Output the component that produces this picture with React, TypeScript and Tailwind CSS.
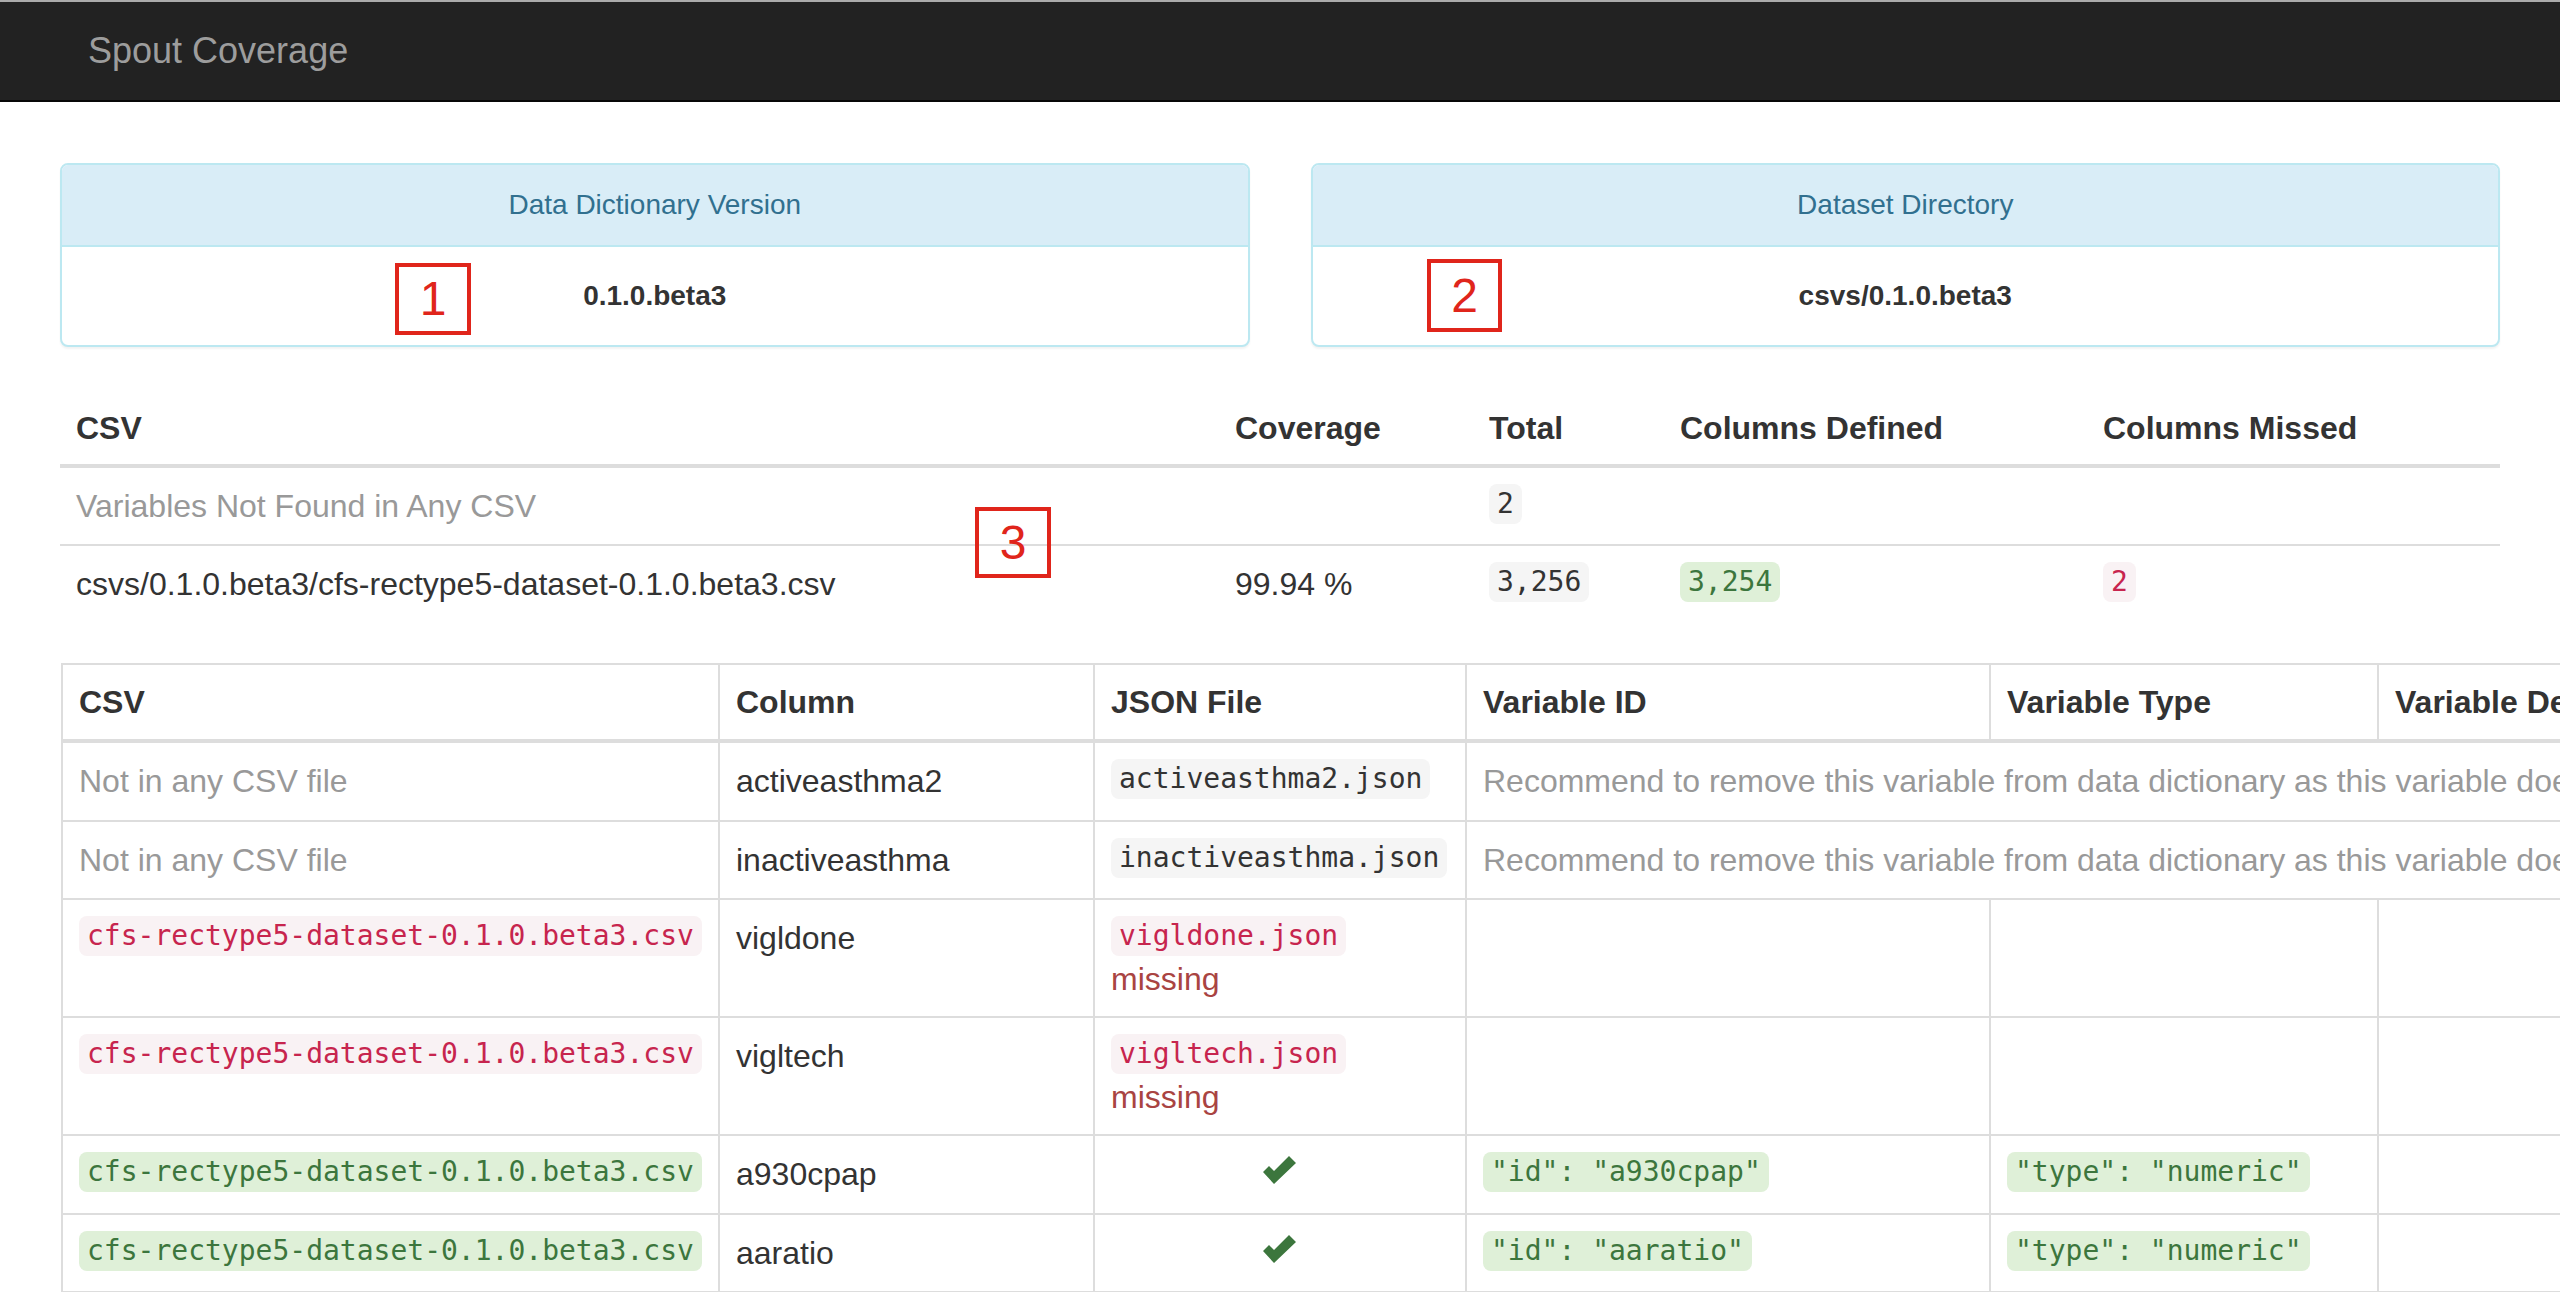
import type { ReactNode } from "react"

type Tone = "gray" | "green" | "pink"

const toneClass: Record<Tone, string> = {
  gray: "bg-[#f5f5f5] text-[#333]",
  green: "bg-[#dff0d8] text-[#3c763d]",
  pink: "bg-[#f9f2f4] text-[#c7254e]",
}

function Code({ tone, children }: { tone: Tone; children: ReactNode }) {
  return (
    <code
      className={`inline-block whitespace-nowrap rounded-lg px-2 py-1 align-top font-['DejaVu_Sans_Mono',monospace] text-[28px] leading-[32px] ${toneClass[tone]}`}
    >
      {children}
    </code>
  )
}

function Check() {
  return (
    <svg viewBox="0 0 34 28" className="mx-auto mt-1 block h-[28px] w-[34px]" fill="#3c763d">
      <polygon points="0,16 6,10 11,15 26,0 33,7 11,28" />
    </svg>
  )
}

// red annotation boxes drawn over the page
function Marker({ n, className }: { n: number; className: string }) {
  return (
    <div
      className={`absolute flex items-center justify-center border-4 border-[#e0251b] text-[48px] leading-none text-[#e0251b] ${className}`}
    >
      {n}
    </div>
  )
}

const panels = [
  { title: "Data Dictionary Version", value: "0.1.0.beta3" },
  { title: "Dataset Directory", value: "csvs/0.1.0.beta3" },
]

const summaryHead = ["CSV", "Coverage", "Total", "Columns Defined", "Columns Missed"]
const detailHead = ["CSV", "Column", "JSON File", "Variable ID", "Variable Type", "Variable Description"]

const csvFile = "cfs-rectype5-dataset-0.1.0.beta3.csv"
const note = "Recommend to remove this variable from data dictionary as this variable does not exist in any CSV."

type Row =
  | { kind: "orphan"; column: string; json: string; lh: string }
  | { kind: "missing"; column: string; json: string; lh: string }
  | { kind: "ok"; column: string; id: string; lh: string }

const rows: Row[] = [
  { kind: "orphan", column: "activeasthma2", json: "activeasthma2.json", lh: "leading-[45px]" },
  { kind: "orphan", column: "inactiveasthma", json: "inactiveasthma.json", lh: "leading-[44px]" },
  { kind: "missing", column: "vigldone", json: "vigldone.json", lh: "leading-[45px]" },
  { kind: "missing", column: "vigltech", json: "vigltech.json", lh: "leading-[45px]" },
  { kind: "ok", column: "a930cpap", id: "a930cpap", lh: "leading-[45px]" },
  { kind: "ok", column: "aaratio", id: "aaratio", lh: "leading-[44px]" },
]

const td = "border-l-2 border-[#ddd] px-4 py-4 align-top"
const sumTd = "px-4 py-4 align-top leading-[44px]"

export default function App() {
  return (
    <div className="relative h-[1292px] w-[2560px] overflow-hidden bg-white font-['Liberation_Sans',Arial,sans-serif] text-[28px] leading-[40px] text-[#333]">
      {/* navbar */}
      <div className="h-[2px] bg-[#ababab]" />
      <div className="flex h-[100px] items-center border-b-2 border-[#080808] bg-[#222] pl-[88px]">
        <span className="text-[36px] text-[#9d9d9d]">Spout Coverage</span>
      </div>

      {/* info panels */}
      <div className="grid grid-cols-2 gap-[61px] px-[60px] pt-[61px]">
        {panels.map((p) => (
          <div
            key={p.title}
            className="rounded-lg border-2 border-[#bce8f1] bg-white shadow-[0_2px_2px_rgba(0,0,0,0.05)]"
          >
            <div className="rounded-t-md border-b-2 border-[#bce8f1] bg-[#d9edf7] py-5 text-center text-[#31708f]">
              {p.title}
            </div>
            <div className="py-[29px] text-center font-bold">{p.value}</div>
          </div>
        ))}
      </div>

      {/* summary table */}
      <table className="ml-[60px] mt-[45px] w-[2440px] table-fixed border-separate border-spacing-0 text-[32px]">
        <colgroup>
          <col className="w-[1159px]" />
          <col className="w-[254px]" />
          <col className="w-[191px]" />
          <col className="w-[423px]" />
          <col className="w-[413px]" />
        </colgroup>
        <thead>
          <tr>
            {summaryHead.map((h) => (
              <th key={h} className="border-b-4 border-[#ddd] px-4 py-4 text-left font-bold leading-[40px]">
                {h}
              </th>
            ))}
          </tr>
        </thead>
        <tbody>
          <tr>
            <td className={`${sumTd} text-[#999]`}>Variables Not Found in Any CSV</td>
            <td className={sumTd} />
            <td className={sumTd}>
              <Code tone="gray">2</Code>
            </td>
            <td className={sumTd} />
            <td className={sumTd} />
          </tr>
          <tr>
            <td className={`${sumTd} border-t-2 border-[#ddd]`}>
              csvs/0.1.0.beta3/cfs-rectype5-dataset-0.1.0.beta3.csv
            </td>
            <td className={`${sumTd} border-t-2 border-[#ddd]`}>99.94 %</td>
            <td className={`${sumTd} border-t-2 border-[#ddd]`}>
              <Code tone="gray">3,256</Code>
            </td>
            <td className={`${sumTd} border-t-2 border-[#ddd]`}>
              <Code tone="green">3,254</Code>
            </td>
            <td className={`${sumTd} border-t-2 border-[#ddd]`}>
              <Code tone="pink">2</Code>
            </td>
          </tr>
        </tbody>
      </table>

      {/* detail table */}
      <table className="ml-[61px] mt-[41px] w-[2916px] table-fixed border-separate border-spacing-0 border-b-2 border-[#ddd] text-[32px]">
        <colgroup>
          <col className="w-[657px]" />
          <col className="w-[375px]" />
          <col className="w-[372px]" />
          <col className="w-[524px]" />
          <col className="w-[388px]" />
          <col className="w-[600px]" />
        </colgroup>
        <thead>
          <tr>
            {detailHead.map((h) => (
              <th
                key={h}
                className="whitespace-nowrap border-b-4 border-l-2 border-t-2 border-[#ddd] px-4 py-4 text-left font-bold leading-[42px]"
              >
                {h}
              </th>
            ))}
          </tr>
        </thead>
        <tbody>
          {rows.map((r, i) => {
            const top = i === 0 ? "" : "border-t-2"
            const cell = `${td} ${top} ${r.lh}`
            if (r.kind === "orphan") {
              return (
                <tr key={r.column}>
                  <td className={`${cell} text-[#999]`}>Not in any CSV file</td>
                  <td className={cell}>{r.column}</td>
                  <td className={cell}>
                    <Code tone="gray">{r.json}</Code>
                  </td>
                  <td colSpan={3} className={`${cell} whitespace-nowrap text-[#999]`}>
                    {note}
                  </td>
                </tr>
              )
            }
            if (r.kind === "missing") {
              return (
                <tr key={r.column}>
                  <td className={cell}>
                    <Code tone="pink">{csvFile}</Code>
                  </td>
                  <td className={cell}>{r.column}</td>
                  <td className={`${td} ${top}`}>
                    <div className="leading-[42px]">
                      <Code tone="pink">{r.json}</Code>
                    </div>
                    <div className="leading-[42px] text-[#a94442]">missing</div>
                  </td>
                  <td className={cell} />
                  <td className={cell} />
                  <td className={cell} />
                </tr>
              )
            }
            return (
              <tr key={r.column}>
                <td className={cell}>
                  <Code tone="green">{csvFile}</Code>
                </td>
                <td className={cell}>{r.column}</td>
                <td className={cell}>
                  <Check />
                </td>
                <td className={cell}>
                  <Code tone="green">"id": "{r.id}"</Code>
                </td>
                <td className={cell}>
                  <Code tone="green">"type": "numeric"</Code>
                </td>
                <td className={cell} />
              </tr>
            )
          })}
        </tbody>
      </table>

      <Marker n={1} className="left-[395px] top-[263px] h-[72px] w-[76px]" />
      <Marker n={2} className="left-[1427px] top-[259px] h-[73px] w-[75px]" />
      <Marker n={3} className="left-[975px] top-[507px] h-[71px] w-[76px]" />
    </div>
  )
}
